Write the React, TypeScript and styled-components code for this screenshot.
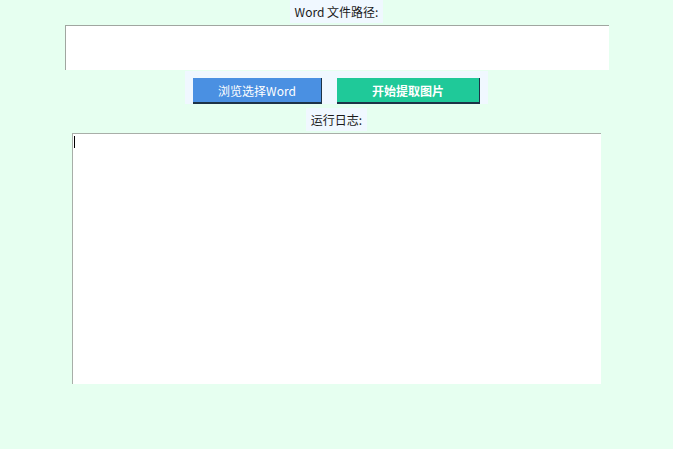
import React from "react";
import styled, { createGlobalStyle } from "styled-components";

const GlobalStyle = createGlobalStyle`
  html, body {
    margin: 0;
    padding: 0;
    background: #e6fff0;
  }
  body {
    font-family: "Noto Sans CJK SC", "Liberation Sans", sans-serif;
    font-size: 12px;
  }
`;

const Page = styled.div`
  width: 673px;
  height: 449px;
  background: #e6fff0;

  display: flex;
  flex-direction: column;
  align-items: center;
`;

const Label = styled.div<{ $top: number }>`
  margin-top: ${(p) => p.$top}px;
  height: 23px;
  padding: 0 5px;
  background: #f0f8ff;
  color: #1a1a1a;
  font-size: 12px;
  line-height: 23px;
`;

const PathInput = styled.input`
  box-sizing: border-box;
  width: 544px;
  height: 45px;
  margin-top: 2px;
  padding: 0 4px;
  background: #ffffff;
  border: none;
  border-top: 1px solid #a0a6a0;
  border-left: 1px solid #a0a6a0;
  outline: none;
`;

const ButtonRow = styled.div`
  margin-top: 1px;
  padding: 7px 8px 0 8px;
  height: 26px;
  background: #f0f8ff;

  display: flex;
  flex-direction: row;
  gap: 15px;
`;

const ActionButton = styled.button<{ $color: string; $width: number; $bold?: boolean }>`
  box-sizing: border-box;
  width: ${(p) => p.$width}px;
  height: 26px;
  padding: 0;
  background: ${(p) => p.$color};
  color: #ffffff;
  border: none;
  border-right: 1px solid #1d3347;
  border-bottom: 2px solid #1d3347;
  font-family: "Noto Sans CJK SC", "Liberation Sans", sans-serif;
  font-size: 12px;
  font-weight: ${(p) => (p.$bold ? 700 : 400)};
  cursor: pointer;
`;

const LogWrap = styled.div`
  position: relative;
  margin-top: 2px;
`;

const LogArea = styled.textarea`
  box-sizing: border-box;
  display: block;
  width: 529px;
  height: 251px;
  padding: 2px 2px;
  background: #ffffff;
  border: none;
  border-top: 1px solid #a8aea8;
  border-left: 1px solid #a8aea8;
  outline: none;
  resize: none;
  caret-color: transparent;
`;

const Caret = styled.span`
  position: absolute;
  left: 2px;
  top: 3px;
  width: 1px;
  height: 12px;
  background: #000000;
`;

export default function App() {
  return (
    <>
      <GlobalStyle />
      <Page>
        <Label $top={0}>Word 文件路径:</Label>
        <PathInput type="text" />
        <ButtonRow>
          <ActionButton $color="#4a90e2" $width={129}>
            浏览选择Word
          </ActionButton>
          <ActionButton $color="#1fc999" $width={143} $bold>
            开始提取图片
          </ActionButton>
        </ButtonRow>
        <Label $top={4}>运行日志:</Label>
        <LogWrap>
          <LogArea readOnly />
          <Caret />
        </LogWrap>
      </Page>
    </>
  );
}
